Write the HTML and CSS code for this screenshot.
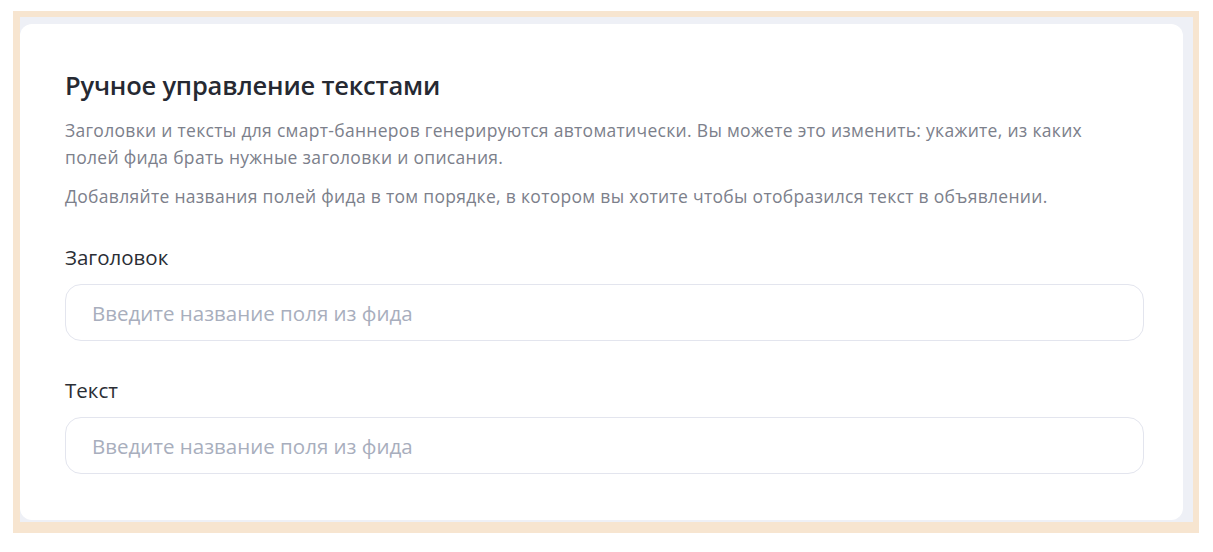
FILE: index.html
```html
<!DOCTYPE html>
<html lang="ru">
<head>
<meta charset="utf-8">
<title>Ручное управление текстами</title>
<link rel="stylesheet" href="styles.css">
</head>
<body>
<div class="frame">
  <div class="backdrop">
    <section class="card">
      <h2 class="title">Ручное управление текстами</h2>
      <p class="desc">Заголовки и тексты для смарт-баннеров генерируются автоматически. Вы можете это изменить: укажите, из каких полей фида брать нужные заголовки и описания.</p>
      <p class="desc desc-second">Добавляйте названия полей фида в том порядке, в котором вы хотите чтобы отобразился текст в объявлении.</p>
      <label class="field">
        <span class="field-label">Заголовок</span>
        <input class="field-input" type="text" placeholder="Введите название поля из фида">
      </label>
      <label class="field field-second">
        <span class="field-label">Текст</span>
        <input class="field-input" type="text" placeholder="Введите название поля из фида">
      </label>
    </section>
  </div>
</div>
</body>
</html>
```

FILE: styles.css
```css
* { box-sizing: border-box; }

html, body {
  margin: 0;
  padding: 0;
  background: #ffffff;
}

body {
  font-family: "Open Sans", "Noto Sans", Arial, sans-serif;
  width: 1213px;
  height: 552px;
  overflow: hidden;
}

.frame {
  margin: 11px 14px 0 13px;
  height: 522px;
  background: #f7e5d0;
  padding: 6px 6px 11px 7px;
}

.backdrop {
  height: 100%;
  background: #eef0f6;
  padding: 7px 10px 2px 0;
}

.card {
  height: 100%;
  background: #ffffff;
  border-radius: 12px;
  padding: 45px 39px 0 45px;
}

.title {
  margin: 0;
  font-size: 25.5px;
  line-height: 32px;
  font-weight: 600;
  color: #262932;
  letter-spacing: -0.2px;
}

.desc {
  margin: 16px 0 0;
  max-width: 1060px;
  font-size: 17.5px;
  letter-spacing: 0.3px;
  line-height: 27px;
  color: #7c808b;
}

.desc-second {
  margin-top: 12px;
}

.field {
  display: flex;
  flex-direction: column;
  margin-top: 34px;
}

.field-second {
  margin-top: 36px;
}

.field-label {
  font-size: 20.5px;
  line-height: 26px;
  color: #2b2e35;
}

.field-input {
  margin-top: 14px;
  height: 57px;
  width: 100%;
  border: 1px solid #e3e5ee;
  border-radius: 16px;
  padding: 0 26px;
  font-family: inherit;
  font-size: 20.5px;
  color: #2b2e35;
  background: #ffffff;
  outline: none;
}

.field-input::placeholder {
  color: #a8aebd;
}
```
